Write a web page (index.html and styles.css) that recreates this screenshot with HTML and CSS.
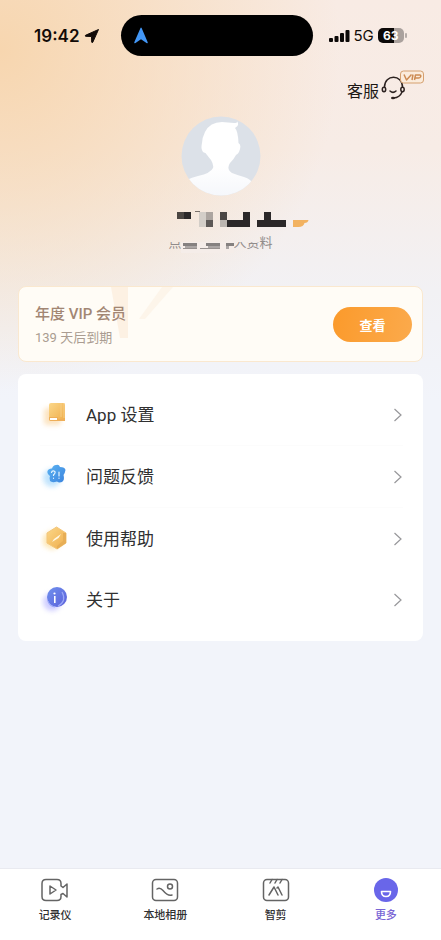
FILE: index.html
```html
<!DOCTYPE html>
<html lang="zh-CN">
<head>
<meta charset="utf-8">
<meta name="viewport" content="width=device-width, initial-scale=1">
<title>更多</title>
<link rel="stylesheet" href="styles.css">
</head>
<body>
<div class="app">
  <header class="status">
    <div class="status-side">
      <span class="time">19:42</span>
      <svg width="16" height="16" viewBox="0 0 16 16" aria-hidden="true"><path d="M14.500 1.500 L1.500 7.300 Q.6 8 1.700 8.300 L7.500 8.500 L7.700 14 Q8 15.300 8.800 14.200 Z" fill="#120b08" stroke="#120b08" stroke-linejoin="round"/></svg>
    </div>
    <div class="island">
      <svg width="16" height="18" viewBox="0 0 16 18" aria-hidden="true"><path d="M7.500 1 Q8 0 8.600 1 L14.700 15.300 Q15 17 13.500 16 L8 12.300 L2.500 16 Q1 17 1.300 15.300 Z" fill="#4296f5"/></svg>
    </div>
    <div class="status-side status-right">
      <svg width="21" height="14" viewBox="0 0 21 14" aria-hidden="true"><g fill="#0c0908"><rect x="0" y="9" width="4" height="4" rx="1"/><rect x="5.500" y="7" width="4" height="6" rx="1"/><rect x="11" y="4" width="4" height="9" rx="1"/><rect x="16.500" y="1" width="4" height="12" rx="1"/></g></svg>
      <span class="network">5G</span>
      <span class="battery">63</span>
    </div>
  </header>

  <main class="content">
    <a class="service" href="#service">
      <span>客服</span>
      <svg width="46" height="32" viewBox="0 0 46 32" aria-hidden="true">
        <g fill="none" stroke="#2c2220" stroke-width="1.500" stroke-linecap="round">
          <path d="M4.500 17 C4.500 4 22.500 4 22.500 17"/>
          <ellipse cx="4" cy="19.500" rx="1.700" ry="2.200"/>
          <ellipse cx="22.500" cy="19.500" rx="1.700" ry="2.200"/>
          <path d="M22 22 Q20 27.500 13.500 28"/>
          <path d="M10 21 Q13 23.700 16 21"/>
        </g>
        <ellipse cx="13" cy="28" rx="2" ry="1.200" fill="#2c2220"/>
        <rect x="20.500" y="1" width="23" height="12" rx="3" fill="#fbecdc" stroke="#d5a06f"/>
        <g fill="none" stroke="#cd8b52" stroke-width="1.500" stroke-linejoin="round"><path d="M24 4.500 L26.500 10 L31.500 4.500 M33 4.500 L32 10 M34.500 10 L35.500 4.900 H39.500 Q41.500 5 40.500 7 Q40 8 38.500 8 H35.500"/></g>
      </svg>
    </a>

    <section class="profile">
      <svg class="avatar" viewBox="0 0 80 80" role="img" aria-label="头像">
        <defs><clipPath id="round"><circle cx="40" cy="40" r="39.500"/></clipPath><linearGradient id="bust" x1="0" y1="0" x2="0" y2="1"><stop offset=".6" stop-color="#fff"/><stop offset="1" stop-color="#f5f7fb"/></linearGradient></defs>
        <g clip-path="url(#round)">
          <rect width="80" height="80" fill="#dce1e8"/>
          <path d="M0 69 Q4 63 17 60 Q30 57 32 52 Q33 49 30 44 Q26 39 24.500 37 Q19 36 21 27 Q21 22 24 16 Q29 6 41 6 L53 7 Q57 7 56 5 Q59 10 54 12 Q57 15 57.500 27 Q61 29 58 36 Q57 38 55 39 Q53 43 49 47 Q45 53 51 57 Q56 59 63 61 Q70 63 73 69 L80 80 H0Z" fill="url(#bust)"/>
        </g>
      </svg>
      <svg class="name" viewBox="0 0 176 18" aria-hidden="true">
        <path d="M44 1h7v7h-7z" fill="#4b4642"/>
        <path d="M51 1h7v7h-7z" fill="#2b2829"/>
        <path d="M62 0h5v1h-5z" fill="#7a716c"/>
        <path d="M66 1h7v15h-7z" fill="#d3cec8"/>
        <path d="M73 1h7v8h-7z" fill="#aca5a0"/>
        <path d="M73 9h7v7h-7z" fill="#5d5957"/>
        <path d="M87 1h7v8h-7z" fill="#4b4745"/>
        <path d="M87 9h7v7h-7z" fill="#bbb5b0"/>
        <path d="M94 9h16V1h7v15H94z" fill="#2b2829"/>
        <path d="M124 9h7V1h7v8h15v7h-29z" fill="#2b2829"/>
        <path d="M160 9h15.500q-.5 3-4 3-1 4-6 4H160z" fill="#f2b260"/>
      </svg>
      <p class="hint"><span class="hint-cut">点击查看个人资</span>料
        <svg class="mosaic" viewBox="0 0 104 11" aria-hidden="true"><path d="M13 0h53v11H13z" fill="#f5ede9"/><path d="M15 1h14v3H15zM38 1h14v3H38zM58 1h8v3h-8z" fill="#858180"/><path d="M17 4h12v2H17zM40 4h12v2H40zM58 4h3v3h-3z" fill="#aba6a5"/><path d="M15 6h14v1H15zM32 6h20v1H32z" fill="#97918f"/></svg>
      </p>
    </section>

    <section class="vip">
      <svg class="vip-mark" viewBox="0 0 70 74" aria-hidden="true"><path d="M0 0h17v51H9z" fill="#fdf1e3"/><path d="M51 0h11L34 32h-6z" fill="#fdf5ea"/></svg>
      <div class="vip-text">
        <h1>年度 VIP 会员</h1>
        <p>139 天后到期</p>
      </div>
      <button class="view" type="button">查看</button>
    </section>

    <nav class="menu" aria-label="设置">
      <a class="row ruled" href="#settings">
        <svg class="icon" viewBox="0 0 32 32" aria-hidden="true">
          <defs><linearGradient id="gold" x1="0" y1="0" x2="1" y2="1"><stop offset="0" stop-color="#fbd789"/><stop offset="1" stop-color="#efad4b"/></linearGradient><filter id="soft" x="-40%" y="-40%" width="180%" height="180%"><feGaussianBlur stdDeviation="2.500"/></filter></defs>
          <rect x="4" y="9" width="17" height="17" rx="3" fill="#fbd8a5" opacity=".7" filter="url(#soft)"/>
          <rect x="9" y="4" width="16" height="18" rx="2" fill="url(#gold)"/><path d="M21 4v14M24 4v15" stroke="#f7cd84" fill="none"/><path d="M9 18h9v2h7v2H11q-2 0-2-2z" fill="#eeae58"/><path d="M10 19h7v2h-7z" fill="#fff"/>
        </svg>
        <span>App 设置</span>
        <svg class="arrow" viewBox="0 0 10 14" aria-hidden="true"><path d="M1.500 1l6.500 6-6.500 6"/></svg>
      </a>
      <a class="row ruled" href="#feedback">
        <svg class="icon" viewBox="0 0 32 32" aria-hidden="true">
          <defs><linearGradient id="blue" x1="0" y1="0" x2="1" y2="1"><stop offset="0" stop-color="#5db4f2"/><stop offset="1" stop-color="#3a83de"/></linearGradient></defs>
          <circle cx="12" cy="17" r="9" fill="#a6d8fc" opacity=".7" filter="url(#soft)"/>
          <path d="M16 4 Q19 3 20 6 Q25 6 25.500 9 Q25 12 23.500 14 Q25 19 22 21 Q19 22 17 20.500 Q12 22 10 20 Q9 17 10 15 Q6 12 8 9 Q10 7 12 7.500 Q13 4 16 4Z" fill="url(#blue)"/>
          <g fill="none" stroke="#e7f6ff" stroke-width="1.200" stroke-linecap="round"><path d="M11.500 11.500 Q12 9.500 14 10 Q16.500 11 13.500 14 V14.500 M13.500 17v.3M19 11v4M19 17v.3"/></g>
        </svg>
        <span>问题反馈</span>
        <svg class="arrow" viewBox="0 0 10 14" aria-hidden="true"><path d="M1.500 1l6.500 6-6.500 6"/></svg>
      </a>
      <a class="row" href="#help">
        <svg class="icon" viewBox="0 0 32 32" aria-hidden="true">
          <path d="M12 7l9 6v9l-9 5-9-5v-9z" fill="#fce0a0" opacity=".75" filter="url(#soft)"/>
          <path d="M16.500 4l9.500 6v10l-9 6-10-6V10z" fill="url(#gold)" stroke="#f3c67a" stroke-linejoin="round"/><path d="M26 10v10l-9 6v-3l6-5v-8z" fill="#e7ae56"/><path d="M12 19l2-3 7-5-2.500 4z" fill="#fff8e6"/>
        </svg>
        <span>使用帮助</span>
        <svg class="arrow" viewBox="0 0 10 14" aria-hidden="true"><path d="M1.500 1l6.500 6-6.500 6"/></svg>
      </a>
      <a class="row" href="#about">
        <svg class="icon" viewBox="0 0 32 32" aria-hidden="true">
          <defs><linearGradient id="violet" x1="0" y1="0" x2="1" y2="1"><stop offset="0" stop-color="#6f91ee"/><stop offset="1" stop-color="#5c60da"/></linearGradient></defs>
          <circle cx="12" cy="18" r="9" fill="#c3c1ff" opacity=".8" filter="url(#soft)"/>
          <circle cx="17" cy="13" r="10" fill="url(#violet)"/><path d="M22 8q5 9-4 14M8 17q1 5 7 6" fill="none" stroke="#9ba8f7" stroke-width="1.200"/><circle cx="14.500" cy="9.500" r="1.100" fill="#fff"/><path d="M14.800 12v7" stroke="#fff" stroke-width="1.600" fill="none"/>
        </svg>
        <span>关于</span>
        <svg class="arrow" viewBox="0 0 10 14" aria-hidden="true"><path d="M1.500 1l6.500 6-6.500 6"/></svg>
      </a>
    </nav>
  </main>

  <nav class="tabs" aria-label="主导航">
    <a class="tab" href="#recorder">
      <svg viewBox="0 0 28 24" aria-hidden="true"><path d="M5 1.500h11q4 0 4 4v2.500l2 1.500 4-3.500v13l-4-3.500-2 1v2q0 4-4 4H5q-4 0-4-4v-13q0-4 4-4z"/><path d="M9 8l6 4-6 4z"/></svg>
      <span>记录仪</span>
    </a>
    <a class="tab" href="#album">
      <svg viewBox="0 0 28 24" aria-hidden="true"><rect x="1.500" y="1.500" width="25" height="21" rx="3.500"/><circle cx="19" cy="8.500" r="2.500"/><path d="M6 11q3-2 6 1.500 5 6 9 4.500"/></svg>
      <span>本地相册</span>
    </a>
    <a class="tab" href="#edit">
      <svg viewBox="0 0 28 24" aria-hidden="true"><rect x="1.500" y="1.500" width="25" height="21" rx="3.500"/><path d="M8 5l2-3.500M13 5l2-3.500M18 5l2-3.500M7 17l5-8 4 8M15 10l1-1 4 8"/></svg>
      <span>智剪</span>
    </a>
    <a class="tab active" href="#more" aria-current="page">
      <svg viewBox="0 0 28 24" aria-hidden="true"><circle cx="14" cy="12" r="12" fill="#6966e9" stroke="none"/><path d="M9.500 13.500h9q0 5-4.500 5t-4.500-5z" fill="#6966e9" stroke="#fff" stroke-width="1.600" stroke-linejoin="round"/></svg>
      <span>更多</span>
    </a>
  </nav>
</div>
</body>
</html>
```
FILE: styles.css
```css
* {
  box-sizing: border-box;
}

body {
  margin: 0;
  font-family: Roboto, "Noto Sans CJK SC", sans-serif;
  color: #303031;
}

h1,
p {
  margin: 0;
}

a {
  color: inherit;
  text-decoration: none;
}

svg {
  display: block;
  flex: none;
}

.app {
  display: flex;
  flex-direction: column;
  min-height: 100vh;
  background:
    radial-gradient(ellipse 340px 340px at 0 50px, #f7d6af 0, rgba(247, 214, 175, 0) 100%),
    linear-gradient(180deg, #f8ebe4 0, #f7ece6 150px, #f2f1f4 290px, #f2f4fa 400px);
}

/* status bar */
.status {
  display: grid;
  grid-template-columns: 1fr 192px 1fr;
  align-items: center;
  padding: 15px 0 0;
  margin-right: 8px;
}

.status-side {
  display: flex;
  align-items: center;
  justify-content: flex-end;
  gap: 4px;
  padding-right: 21px;
  font-family: Inter, sans-serif;
  color: #120b08;
}

.time {
  font-size: 17px;
  font-weight: 600;
}

.island {
  display: flex;
  align-items: center;
  height: 41px;
  padding-left: 12px;
  border-radius: 21px;
  background: #000;
}

.status-right {
  justify-content: flex-start;
  padding: 0 0 0 16px;
}

.network {
  font-size: 15px;
}

.battery {
  position: relative;
  width: 26px;
  height: 15px;
  border-radius: 5px;
  background: linear-gradient(90deg, #0c0908 63%, #aaa19d 63%);
  color: #fff;
  font-size: 12px;
  font-weight: 700;
  line-height: 15px;
  text-align: center;
}

.battery::after {
  content: "";
  position: absolute;
  top: 5px;
  right: -3px;
  width: 2px;
  height: 5px;
  border-radius: 1px;
  background: #b5aca8;
}

/* page content */
.content {
  flex: 1;
  padding: 14px 18px 24px;
}

.service {
  display: flex;
  justify-content: flex-end;
  height: 32px;
  margin-right: -3px;
  gap: 1px;
  font-size: 16px;
  line-height: 43px;
  color: #1c1715;
}

.profile {
  display: flex;
  flex-direction: column;
  align-items: center;
  padding-top: 14px;
}

.avatar {
  width: 80px;
  height: 80px;
}

.name {
  width: 176px;
  height: 18px;
  margin-top: 15px;
}

.hint {
  position: relative;
  margin-top: 4px;
  font-size: 13px;
  line-height: 20px;
  white-space: nowrap;
  color: #918c8b;
}

.hint-cut {
  display: inline-block;
  vertical-align: top;
  clip-path: inset(9px 0 0 0);
}

.mosaic {
  position: absolute;
  left: 0;
  bottom: 0;
  width: 104px;
  height: 11px;
}

.vip {
  position: relative;
  display: flex;
  align-items: center;
  justify-content: space-between;
  height: 76px;
  margin-top: 33px;
  padding: 0 10px 0 16px;
  border: 1px solid #fae8cf;
  border-radius: 8px;
  background: #fffcf6;
}

.vip-mark {
  position: absolute;
  top: 0;
  left: 92px;
  width: 70px;
  height: 74px;
}

.vip-text {
  position: relative;
  padding-top: 3px;
}

.vip h1 {
  font-size: 15px;
  font-weight: 500;
  line-height: 24px;
  color: #a28673;
}

.vip p {
  font-size: 13px;
  line-height: 24px;
  color: #aa9c91;
}

.view {
  width: 79px;
  height: 35px;
  padding: 0;
  border: 0;
  border-radius: 18px;
  background: linear-gradient(100deg, #fb9a2b, #fbaa4c);
  color: #fff;
  font: 700 13px Roboto, "Noto Sans CJK SC", sans-serif;
}

.menu {
  margin-top: 12px;
  padding: 10px 20px 11px 22px;
  border-radius: 8px;
  background: #fff;
}

.row {
  display: flex;
  align-items: center;
  height: 61px;
  font-size: 17px;
  line-height: 24px;
}

.ruled {
  height: 62px;
  border-bottom: 1px solid #fcfcfc;
}

.icon {
  width: 32px;
  height: 32px;
  margin-right: 14px;
}

.arrow {
  width: 10px;
  height: 14px;
  margin-left: auto;
  fill: none;
  stroke: #97979a;
  stroke-width: 1.200;
}

/* bottom navigation */
.tabs {
  display: grid;
  grid-template-columns: repeat(4, 1fr);
  height: 72px;
  padding-top: 9px;
  border-top: 1px solid #e9eaf0;
  background: #fff;
}

.tab {
  display: flex;
  flex-direction: column;
  align-items: center;
  gap: 6px;
  font-size: 11px;
  font-weight: 500;
  line-height: 16px;
}

.tab svg {
  width: 28px;
  height: 24px;
  fill: none;
  stroke: #646464;
  stroke-width: 1.500;
  stroke-linecap: round;
  stroke-linejoin: round;
}

.active {
  color: #7965d5;
}
```
